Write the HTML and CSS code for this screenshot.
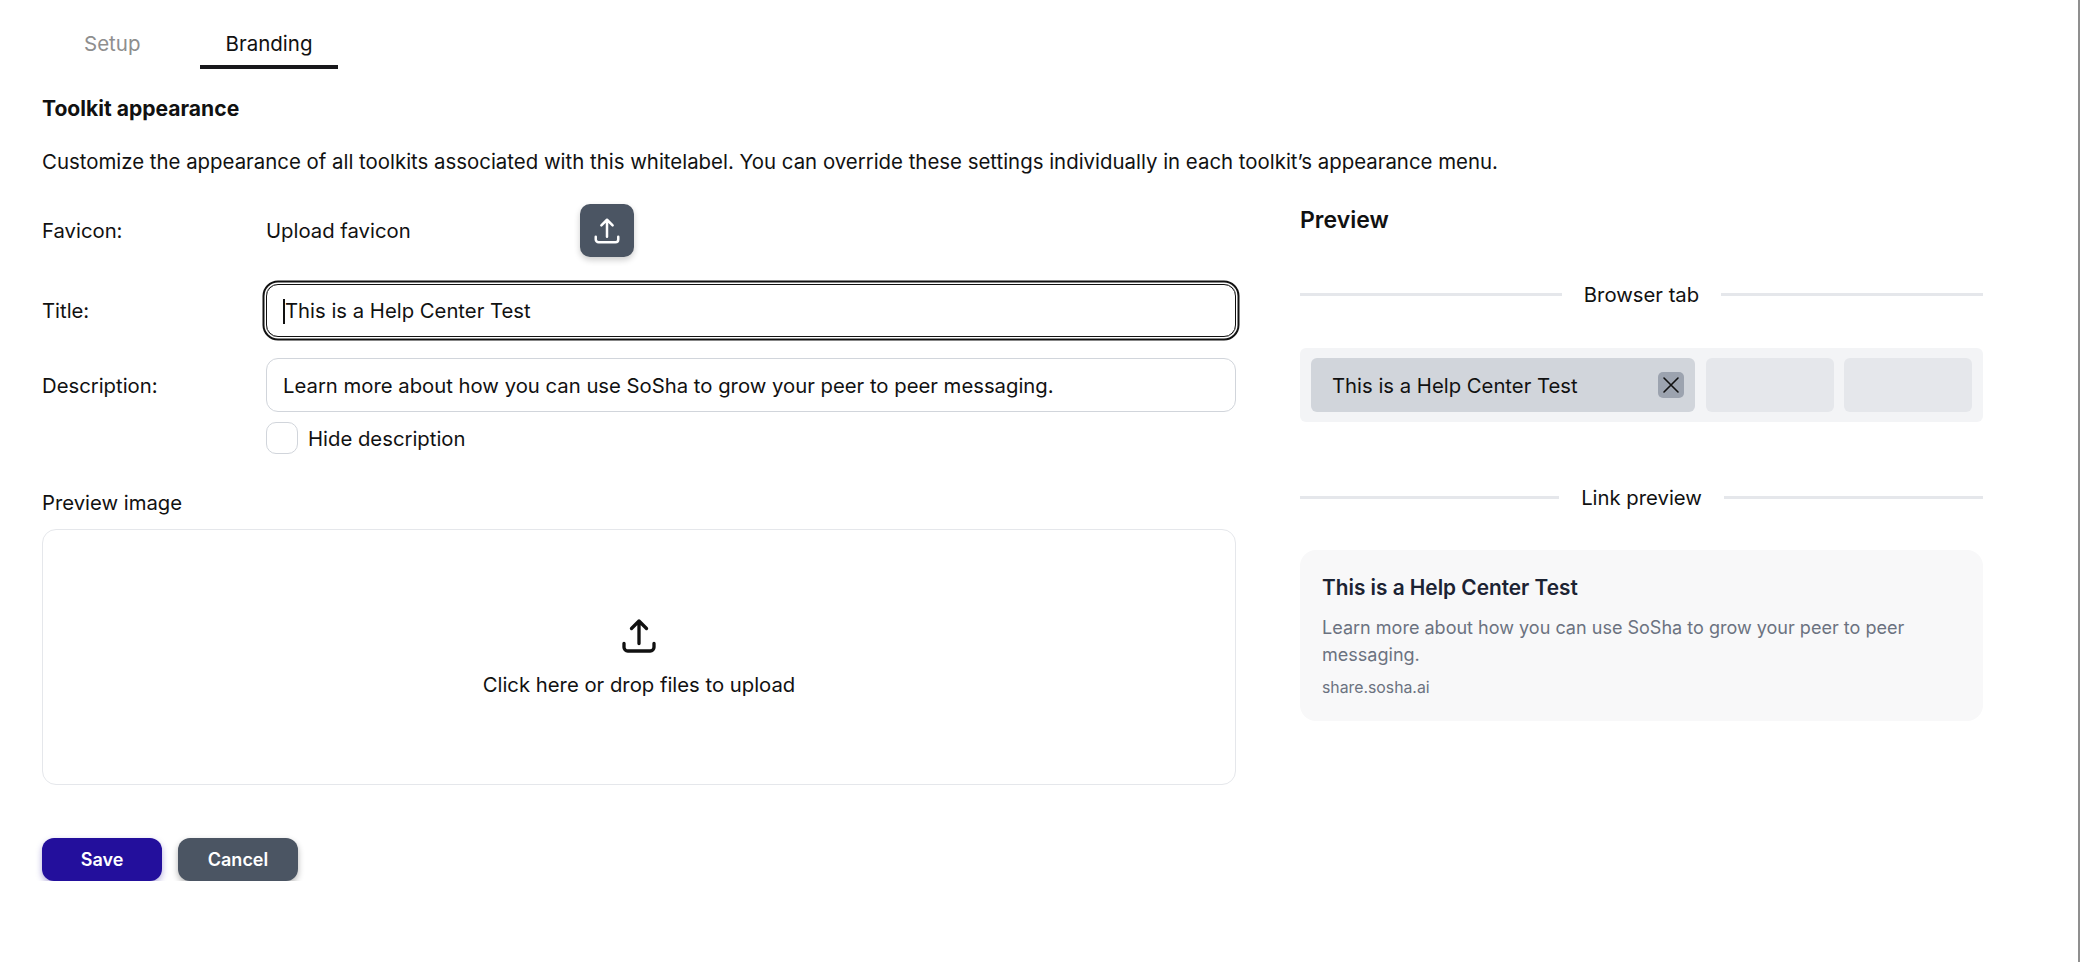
FILE: index.html
```html
<!DOCTYPE html>
<html lang="en">
<head>
  <meta charset="UTF-8" />
  <title>Toolkit appearance</title>
  <link rel="stylesheet" href="styles.css">
</head>
<body>

  <div class="tabs">
    <a class="tab">Setup</a>
    <a class="tab active">Branding</a>
  </div>

  <h1 class="page-title">Toolkit appearance</h1>
  <p class="intro">Customize the appearance of all toolkits associated with this whitelabel. You can override these settings individually in each toolkit’s appearance menu.</p>

  <div class="columns">
    <div class="form">
      <div class="row row-favicon">
        <label>Favicon:</label>
        <span class="upload-label">Upload favicon</span>
        <button class="icon-btn">
          <svg class="upload-icon" width="30" height="30" viewBox="0 0 24 24" fill="none" stroke="currentColor" stroke-width="2" stroke-linecap="round" stroke-linejoin="round"><path d="M3 16.5v2.25A2.25 2.25 0 0 0 5.25 21h13.5A2.25 2.25 0 0 0 21 18.75V16.5m-13.5-9L12 3m0 0 4.5 4.5M12 3v13.5"/></svg>
        </button>
      </div>

      <div class="row row-title">
        <label>Title:</label>
        <div class="field focused" contenteditable="true"><span class="caret"></span>This is a Help Center Test</div>
      </div>

      <div class="row row-desc">
        <label>Description:</label>
        <div class="field" contenteditable="true">Learn more about how you can use SoSha to grow your peer to peer messaging.</div>
      </div>

      <div class="row row-check">
        <span></span>
        <div class="check-wrap">
          <span class="checkbox"></span>
          <span class="check-text">Hide description</span>
        </div>
      </div>

      <div class="image-label">Preview image</div>
      <div class="dropzone">
        <svg class="upload-icon" width="40" height="40" viewBox="0 0 24 24" fill="none" stroke="currentColor" stroke-width="2" stroke-linecap="round" stroke-linejoin="round"><path d="M3 16.5v2.25A2.25 2.25 0 0 0 5.25 21h13.5A2.25 2.25 0 0 0 21 18.75V16.5m-13.5-9L12 3m0 0 4.5 4.5M12 3v13.5"/></svg>
        <div>Click here or drop files to upload</div>
      </div>

      <div class="actions">
        <button class="btn btn-primary">Save</button>
        <button class="btn btn-secondary">Cancel</button>
      </div>
    </div>

    <div class="preview">
      <h2>Preview</h2>

      <div class="divider divider-tab"><span>Browser tab</span></div>
      <div class="browser-bar">
        <div class="browser-tab current">
          <span class="tab-text">This is a Help Center Test</span>
          <span class="tab-close">
            <svg width="26" height="26" viewBox="0 0 26 26" fill="none" stroke="currentColor" stroke-width="1.6" stroke-linecap="round"><path d="M6 6l14 14M20 6L6 20"/></svg>
          </span>
        </div>
        <div class="browser-tab"></div>
        <div class="browser-tab"></div>
      </div>

      <div class="divider divider-link"><span>Link preview</span></div>
      <div class="link-card">
        <div class="link-title">This is a Help Center Test</div>
        <div class="link-desc">Learn more about how you can use SoSha to grow your peer to peer messaging.</div>
        <div class="link-url">share.sosha.ai</div>
      </div>
    </div>
  </div>

</body>
</html>
```

FILE: styles.css
```css
* { box-sizing: border-box; }

body {
  margin: 0;
  padding: 0 97px 0 42px;
  font-family: Inter, "Liberation Sans", sans-serif;
  font-size: 20.3px;
  line-height: 24px;
  color: #111;
  background: #fff;
}

/* window edge on the right of the capture */
body::after {
  content: "";
  position: fixed;
  top: 0;
  right: 0;
  bottom: 0;
  width: 2px;
  background: #8f8f8f;
}

.tabs {
  display: flex;
  gap: 33px;
  margin-left: 16px;
}

.tab {
  padding: 32px 26px 9px;
  border-bottom: 4px solid transparent;
  font-size: 20.5px;
  color: #8e8e8e;
}

.tab.active {
  color: #111;
  border-bottom-color: #18181b;
}

.page-title {
  margin: 28px 0 0;
  font-size: 21.1px;
  line-height: 24px;
  font-weight: 700;
}

.intro {
  margin: 29px 0 30px;
  font-size: 20.4px;
}

.columns {
  display: grid;
  grid-template-columns: 1194px 683px;
  gap: 64px;
}

.row {
  display: grid;
  grid-template-columns: 224px 970px;
  align-items: center;
}

.row-favicon {
  grid-template-columns: 224px 314px 54px;
  height: 53px;
}

.row-title { margin-top: 27px; }
.row-desc { margin-top: 21px; }
.row-desc label { padding-top: 1px; }
.row-check { margin-top: 10px; }

.icon-btn {
  display: flex;
  align-items: center;
  justify-content: center;
  width: 54px;
  height: 53px;
  padding: 0;
  border: 0;
  border-radius: 10px;
  background: #4b5563;
  color: #fff;
  box-shadow: 0 3px 6px rgba(0,0,0,0.2);
}

.field {
  height: 54px;
  padding: 15px 16px 0;
  border: 1px solid #d1d5db;
  border-radius: 12px;
  outline: none;
  white-space: nowrap;
}

.field.focused {
  height: 53px;
  padding-top: 14px;
  border-color: #111;
  box-shadow: 0 0 0 1.5px #fff, 0 0 0 3.5px #111;
}

.caret {
  display: inline-block;
  width: 0;
  height: 25px;
  margin-right: 0;
  border-left: 2px solid #111;
  vertical-align: -6px;
}

.check-wrap {
  display: flex;
  align-items: center;
  gap: 10px;
}

.check-text { padding-top: 1px; }

.checkbox {
  width: 32px;
  height: 32px;
  border: 1px solid #d1d5db;
  border-radius: 10px;
}

.image-label { margin-top: 37px; }

.dropzone {
  display: flex;
  flex-direction: column;
  align-items: center;
  justify-content: center;
  gap: 17px;
  height: 256px;
  margin-top: 14px;
  padding-bottom: 2px;
  border: 1px solid #e5e7eb;
  border-radius: 14px;
}

.actions {
  display: flex;
  gap: 16px;
  margin-top: 53px;
}

.btn {
  width: 120px;
  height: 43px;
  border: 0;
  border-radius: 12px;
  font-family: inherit;
  font-size: 18px;
  font-weight: 600;
  color: #fff;
}

.btn-primary {
  background: #230f9c;
  box-shadow: 0 3px 6px rgba(35,15,156,0.35);
}

.btn-secondary {
  background: #4b5563;
  box-shadow: 0 3px 6px rgba(0,0,0,0.3);
}

.preview h2 {
  margin: 0;
  padding-top: 1px;
  font-size: 23px;
  line-height: 30px;
  font-weight: 600;
}

.divider {
  display: flex;
  align-items: center;
  gap: 22px;
}

.divider span { padding-top: 1px; }

.divider::before, .divider::after {
  content: "";
  flex: 1;
  height: 3px;
  background: #e5e7eb;
}

.divider-tab { margin-top: 47px; }
.divider-link { margin-top: 63px; }

.browser-bar {
  display: grid;
  grid-template-columns: 384px 128px 128px;
  gap: 10.5px;
  margin-top: 41px;
  padding: 10px 11px;
  border-radius: 6px;
  background: #f3f4f6;
}

.browser-tab {
  height: 54px;
  border-radius: 6px;
  background: #e5e7eb;
}

.browser-tab.current {
  display: flex;
  align-items: center;
  justify-content: space-between;
  padding: 0 11px 0 21px;
  background: #d1d5db;
}

.tab-text { padding-top: 1px; }

.tab-close {
  display: block;
  width: 26px;
  height: 26px;
  border-radius: 5px;
  background: #9ca3af;
}

.tab-close svg { display: block; }

.link-card {
  margin-top: 40px;
  padding: 24px 22px 23px;
  border-radius: 16px;
  background: #f8f8f9;
}

.link-title {
  font-size: 20.8px;
  line-height: 28px;
  font-weight: 600;
  color: #1c2333;
}

.link-desc {
  margin-top: 12px;
  font-size: 18.05px;
  line-height: 27px;
  color: #6b7280;
}

.link-url {
  margin-top: 10px;
  font-size: 15.8px;
  line-height: 20px;
  color: #6b7280;
}
```
